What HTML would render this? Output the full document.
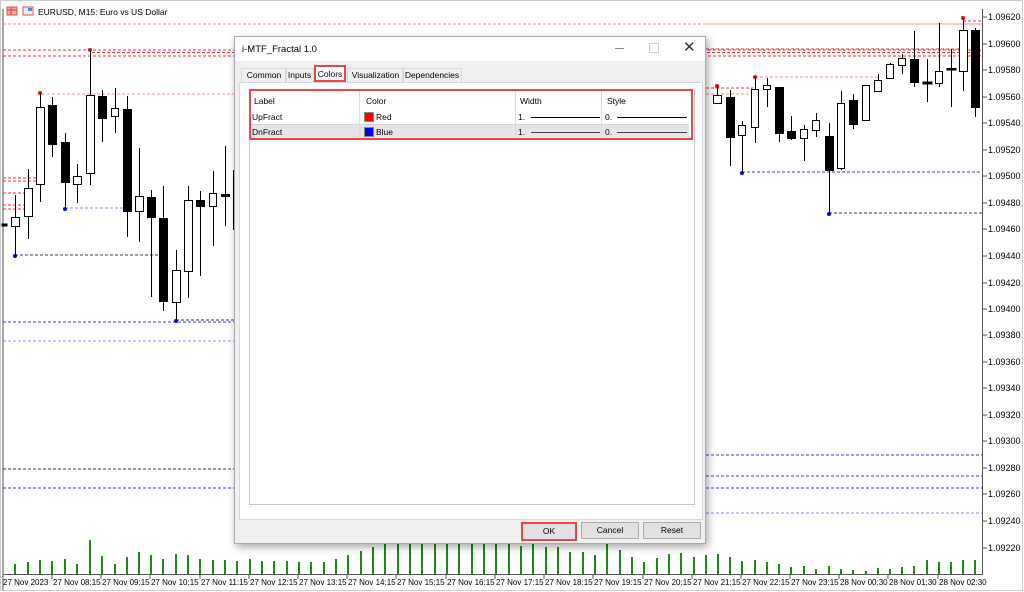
<!DOCTYPE html>
<html><head><meta charset="utf-8"><style>
body{margin:0;width:1024px;height:592px;overflow:hidden;background:#fff;font-family:"Liberation Sans",sans-serif;position:relative}
svg{position:absolute;left:0;top:0}
.ax{font-size:9px;fill:#000;font-family:"Liberation Sans",sans-serif}
.tx{font-size:8px;fill:#000;font-family:"Liberation Sans",sans-serif}
#dlg{position:absolute;left:234px;top:36px;width:472px;height:508px;background:#f0f0f0;border:1px solid #aaa;box-shadow:2px 3px 8px rgba(0,0,0,.35);box-sizing:border-box;font-size:8.5px;color:#000}
.t{position:absolute}
</style></head><body>
<svg width="1024" height="592">
<rect x="0" y="0" width="1024" height="592" fill="#fff"/>
<rect x="0.5" y="0.5" width="1022" height="590" fill="none" stroke="#ccc"/>
<line x1="3" y1="9" x2="3" y2="590" stroke="#888" stroke-width="1.5"/>
<line x1="3" y1="574.5" x2="983" y2="574.5" stroke="#555"/>
<line x1="982.5" y1="9" x2="982.5" y2="575" stroke="#555"/>
<rect x="7" y="7" width="10" height="8" fill="#f4a5a5" stroke="#d55"/>
<line x1="7" y1="10" x2="17" y2="10" stroke="#c44"/><line x1="11" y1="7" x2="11" y2="15" stroke="#c44"/>
<rect x="23" y="7" width="10" height="8" fill="#e7f0fa" stroke="#d55"/><rect x="28" y="8" width="4" height="3" fill="#4a8fd0"/>
<text x="38" y="15" style="font-size:8.5px">EURUSD, M15:  Euro vs US Dollar</text>
<g fill="none" stroke-dasharray="3,2">
<line x1="3" y1="24" x2="982" y2="24" stroke="#f88"/>
<line x1="3" y1="50" x2="982" y2="50" stroke="#e33"/>
<line x1="92" y1="52.5" x2="982" y2="52.5" stroke="#e33"/>
<line x1="3" y1="56" x2="982" y2="56" stroke="#e33"/>
<line x1="42" y1="94" x2="240" y2="94" stroke="#f99"/>
<line x1="3" y1="178" x2="38" y2="178" stroke="#e33"/>
<line x1="3" y1="181" x2="38" y2="181" stroke="#e33"/>
<line x1="3" y1="193" x2="26" y2="193" stroke="#e33"/>
<line x1="3" y1="205" x2="26" y2="205" stroke="#e33"/>
<line x1="3" y1="209" x2="26" y2="209" stroke="#e33"/>
<line x1="65" y1="208" x2="126" y2="208" stroke="#88f"/>
<line x1="15" y1="255" x2="160" y2="255" stroke="#334"/>
<line x1="176" y1="320" x2="234" y2="320" stroke="#334"/>
<line x1="3" y1="322" x2="234" y2="322" stroke="#33f"/>
<line x1="3" y1="341" x2="234" y2="341" stroke="#88f"/>
<line x1="3" y1="469" x2="234" y2="469" stroke="#334"/>
<line x1="3" y1="488" x2="234" y2="488" stroke="#33f"/>
<line x1="706" y1="24" x2="982" y2="24" stroke="#f88"/>
<line x1="706" y1="88" x2="753" y2="88" stroke="#e33"/>
<line x1="706" y1="94" x2="753" y2="94" stroke="#f88"/>
<line x1="755" y1="77" x2="880" y2="77" stroke="#f88"/>
<line x1="706" y1="49" x2="962" y2="49" stroke="#e33"/>
<line x1="742" y1="172" x2="982" y2="172" stroke="#33f"/>
<line x1="829" y1="213" x2="982" y2="213" stroke="#334"/>
<line x1="706" y1="455" x2="982" y2="455" stroke="#33f"/>
<line x1="706" y1="476" x2="982" y2="476" stroke="#33f"/>
<line x1="706" y1="488" x2="982" y2="488" stroke="#33f"/>
<line x1="706" y1="513" x2="982" y2="513" stroke="#88f"/>
<line x1="963" y1="21" x2="982" y2="21" stroke="#e33"/>
</g>
<g fill="#f00"><circle cx="40" cy="93" r="2"/><circle cx="90" cy="50" r="2"/><circle cx="717" cy="86" r="2"/><circle cx="755" cy="77" r="2"/><circle cx="963" cy="18" r="2"/></g>
<g fill="#00f"><circle cx="15" cy="256" r="2"/><circle cx="65" cy="209" r="2"/><circle cx="176" cy="321" r="2"/><circle cx="742" cy="173" r="2"/><circle cx="829" cy="214" r="2"/></g>
<g stroke="#000" stroke-width="1">
<path d="M15.5 195V256M28.5 169V239M40.5 93V202M52.5 97V157M65.5 133V208M77.5 164V203M90.5 50V185M102.5 90V142M115.5 88V133M127.5 96V237M139.5 148V242M151.5 190V297M163.5 186V311M176.5 250V320M188.5 186V298M200.5 191V276M213.5 171V246M225.5 146V226M233.5 170V230M730.5 90V166M742.5 121V173M755.5 77V143M767.5 78V107M779.5 87V142M791.5 116V140M804.5 125V161M816.5 113V137M829.5 123V214M841.5 91V170M853.5 94V129M866.5 85V120M878.5 74V91M890.5 63V79M902.5 54V74M914.5 31V87M927.5 59V102M939.5 23V87M951.5 49V107M963.5 18V91M975.5 28V117M717.5 86V104"/>
<g fill="#fff">
<rect x="11.5" y="217.5" width="8" height="9"/><rect x="24.5" y="188.5" width="8" height="28"/><rect x="36.5" y="107.5" width="8" height="77"/><rect x="73.5" y="176.5" width="8" height="8"/><rect x="86.5" y="95.5" width="8" height="78"/><rect x="111.5" y="108.5" width="7" height="8"/><rect x="135.5" y="196.5" width="8" height="15"/><rect x="172.5" y="270.5" width="8" height="32"/><rect x="184.5" y="200.5" width="8" height="71"/><rect x="209.5" y="193.5" width="7" height="13"/>
<rect x="713.5" y="95.5" width="8" height="8"/><rect x="738.5" y="125.5" width="7" height="10"/><rect x="751.5" y="89.5" width="7" height="38"/><rect x="763.5" y="85.5" width="7" height="4"/><rect x="800.5" y="129.5" width="7" height="9"/><rect x="812.5" y="120.5" width="7" height="10"/><rect x="837.5" y="103.5" width="7" height="65"/><rect x="862.5" y="85.5" width="7" height="35"/><rect x="874.5" y="80.5" width="7" height="11"/><rect x="886.5" y="64.5" width="7" height="14"/><rect x="898.5" y="58.5" width="7" height="7"/><rect x="935.5" y="71.5" width="7" height="12"/><rect x="959.5" y="30.5" width="8" height="41"/>
</g>
<g fill="#000">
<rect x="2" y="224" width="5" height="2"/><rect x="48.5" y="105.5" width="8" height="39"/><rect x="61.5" y="142.5" width="8" height="40"/><rect x="98.5" y="96.5" width="8" height="22"/><rect x="123.5" y="109.5" width="8" height="102"/><rect x="147.5" y="197.5" width="8" height="20"/><rect x="159.5" y="218.5" width="8" height="83"/><rect x="196.5" y="200.5" width="8" height="6"/><rect x="221.5" y="194.5" width="8" height="2"/>
<rect x="726.5" y="97.5" width="8" height="40"/><rect x="775.5" y="87.5" width="8" height="46"/><rect x="787.5" y="131.5" width="8" height="7"/><rect x="825.5" y="136.5" width="8" height="34"/><rect x="849.5" y="100.5" width="8" height="24"/><rect x="910.5" y="59.5" width="8" height="23"/><rect x="923" y="82" width="9" height="2"/><rect x="947" y="68.5" width="9" height="1.5"/><rect x="971.5" y="30.5" width="8" height="77"/>
</g>
</g>
<g stroke="#1a8a1a" stroke-width="2">
<path d="M15 574v-10M28 574v-12M40 574v-14M52 574v-13M65 574v-15M77 574v-10M90 574v-34M102 574v-18M115 574v-10M127 574v-17M139 574v-22M151 574v-19M163 574v-15M176 574v-20M188 574v-19M200 574v-15M213 574v-14M225 574v-14M237 574v-13M250 574v-15M262 574v-13M274 574v-13M287 574v-13M299 574v-12M311 574v-12M324 574v-12M336 574v-15M348 574v-19M361 574v-23M373 574v-27M385 574v-30M398 574v-30M410 574v-30M422 574v-30M435 574v-30M447 574v-30M459 574v-30M472 574v-30M484 574v-30M496 574v-30M509 574v-30M521 574v-28M533 574v-30M546 574v-27M558 574v-27M570 574v-22M583 574v-22M595 574v-19M607 574v-30M620 574v-24M632 574v-17M644 574v-12M657 574v-16M669 574v-20M681 574v-21M694 574v-17M706 574v-19M718 574v-20M730 574v-17M742 574v-13M755 574v-14M767 574v-12M779 574v-10M791 574v-7M804 574v-8M816 574v-5M829 574v-8M841 574v-5M853 574v-4M866 574v-3M878 574v-6M890 574v-5M902 574v-7M914 574v-8M927 574v-14M939 574v-12M951 574v-12M963 574v-14M975 574v-14"/>
</g>
<g stroke="#555"><path d="M983 17h4M983 44h4M983 70h4M983 97h4M983 123h4M983 150h4M983 176h4M983 203h4M983 229h4M983 256h4M983 283h4M983 309h4M983 335h4M983 362h4M983 388h4M983 415h4M983 441h4M983 468h4M983 494h4M983 521h4M983 548h4"/></g>
<g class="ax">
<text x="988" y="20">1.09620</text><text x="988" y="47">1.09600</text><text x="988" y="73">1.09580</text><text x="988" y="100">1.09560</text><text x="988" y="126">1.09540</text><text x="988" y="153">1.09520</text><text x="988" y="179">1.09500</text><text x="988" y="206">1.09480</text><text x="988" y="232">1.09460</text><text x="988" y="259">1.09440</text><text x="988" y="286">1.09420</text><text x="988" y="312">1.09400</text><text x="988" y="338">1.09380</text><text x="988" y="365">1.09360</text><text x="988" y="391">1.09340</text><text x="988" y="418">1.09320</text><text x="988" y="444">1.09300</text><text x="988" y="471">1.09280</text><text x="988" y="497">1.09260</text><text x="988" y="524">1.09240</text><text x="988" y="551">1.09220</text>
</g>
<g stroke="#555"><path d="M52 574v5M101 574v5M150 574v5M200 574v5M249 574v5M298 574v5M347 574v5M396 574v5M446 574v5M495 574v5M544 574v5M593 574v5M643 574v5M692 574v5M741 574v5M790 574v5M839 574v5M888 574v5M938 574v5"/></g>
<g class="tx">
<text x="3" y="585">27 Nov 2023</text><text x="53" y="585">27 Nov 08:15</text><text x="102" y="585">27 Nov 09:15</text><text x="151" y="585">27 Nov 10:15</text><text x="201" y="585">27 Nov 11:15</text><text x="250" y="585">27 Nov 12:15</text><text x="299" y="585">27 Nov 13:15</text><text x="348" y="585">27 Nov 14:15</text><text x="397" y="585">27 Nov 15:15</text><text x="447" y="585">27 Nov 16:15</text><text x="496" y="585">27 Nov 17:15</text><text x="545" y="585">27 Nov 18:15</text><text x="594" y="585">27 Nov 19:15</text><text x="644" y="585">27 Nov 20:15</text><text x="693" y="585">27 Nov 21:15</text><text x="742" y="585">27 Nov 22:15</text><text x="791" y="585">27 Nov 23:15</text><text x="840" y="585">28 Nov 00:30</text><text x="889" y="585">28 Nov 01:30</text><text x="939" y="585">28 Nov 02:30</text>
</g>
</svg>

<div id="dlg">
 <div class="t" style="left:0;top:0;width:470px;height:24px;background:#fff"></div>
 <div class="t" style="left:7px;top:7px;font-size:9.5px">i-MTF_Fractal 1.0</div>
 <div class="t" style="left:380px;top:11px;width:9px;border-top:1px solid #888"></div>
 <div class="t" style="left:414px;top:6px;width:8px;height:8px;border:1px solid #ccc"></div>
 <div class="t" style="left:448px;top:1px;font-size:15px;color:#333">✕</div>
 <div class="t" style="left:6px;top:31px;width:44px;height:13px;border:1px solid #d9d9d9;background:#f0f0f0;text-align:center;line-height:13px">Common</div>
 <div class="t" style="left:50px;top:31px;width:27px;height:13px;border:1px solid #d9d9d9;text-align:center;line-height:13px">Inputs</div>
 <div class="t" style="left:112px;top:31px;width:55px;height:13px;border:1px solid #d9d9d9;text-align:center;line-height:13px">Visualization</div>
 <div class="t" style="left:167px;top:31px;width:58px;height:13px;border:1px solid #d9d9d9;text-align:center;line-height:13px">Dependencies</div>
 <div class="t" style="left:4px;top:45px;width:462px;height:436px;background:#fff;border:1px solid #d9d9d9"></div>
 <div class="t" style="left:79px;top:28px;width:32px;height:17px;background:#fff;border:2px solid #e8474c;box-sizing:border-box;text-align:center;line-height:14px">Colors</div>
 <div class="t" style="left:14px;top:53px;width:444px;height:413px;border:1px solid #c8c8c8;background:#fff"></div>
 <div class="t" style="left:15px;top:87px;width:439px;height:14px;background:#e6e6e6;border-top:1px solid #d6d6d6;border-bottom:1px solid #d6d6d6"></div>
 <div class="t" style="left:124px;top:54px;height:48px;border-left:1px solid #ddd"></div>
 <div class="t" style="left:280px;top:54px;height:48px;border-left:1px solid #ddd"></div>
 <div class="t" style="left:366px;top:54px;height:48px;border-left:1px solid #ddd"></div>
 <div class="t" style="left:19px;top:59px">Label</div><div class="t" style="left:131px;top:59px">Color</div><div class="t" style="left:285px;top:59px">Width</div><div class="t" style="left:372px;top:59px">Style</div>
 <div class="t" style="left:17px;top:75px">UpFract</div>
 <div class="t" style="left:129px;top:75px;width:8px;height:8px;background:#f00;border:1px solid #888"></div><div class="t" style="left:141px;top:75px">Red</div>
 <div class="t" style="left:283px;top:75px">1.</div><div class="t" style="left:296px;top:80px;width:69px;border-top:1px solid #000"></div>
 <div class="t" style="left:370px;top:75px">0.</div><div class="t" style="left:382px;top:80px;width:70px;border-top:1px solid #000"></div>
 <div class="t" style="left:17px;top:90px">DnFract</div>
 <div class="t" style="left:129px;top:90px;width:8px;height:8px;background:#00f;border:1px solid #888"></div><div class="t" style="left:141px;top:90px">Blue</div>
 <div class="t" style="left:283px;top:90px">1.</div><div class="t" style="left:296px;top:95px;width:69px;border-top:1px solid #444"></div>
 <div class="t" style="left:370px;top:90px">0.</div><div class="t" style="left:382px;top:95px;width:70px;border-top:1px solid #444"></div>
 <div class="t" style="left:14px;top:52px;width:444px;height:51px;border:2px solid #e8474c;box-sizing:border-box"></div>
 <div class="t" style="left:286px;top:485px;width:52px;height:15px;background:#e1e1e1;border:2px solid #e8474c;text-align:center;line-height:15px">OK</div>
 <div class="t" style="left:346px;top:485px;width:56px;height:15px;background:#e1e1e1;border:1px solid #adadad;text-align:center;line-height:15px">Cancel</div>
 <div class="t" style="left:408px;top:485px;width:56px;height:15px;background:#e1e1e1;border:1px solid #adadad;text-align:center;line-height:15px">Reset</div>
</div>
</body></html>
